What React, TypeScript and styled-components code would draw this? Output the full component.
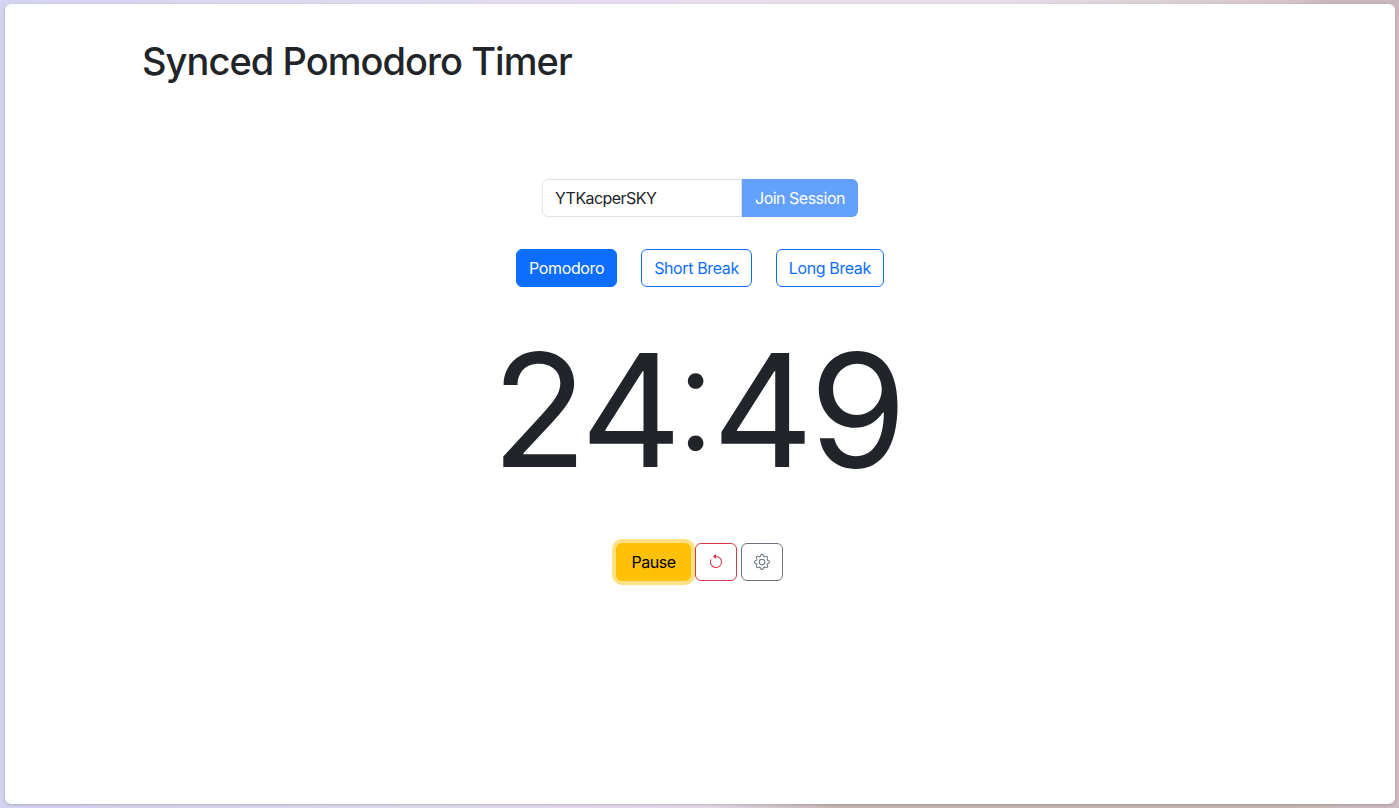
import { useState } from 'react';
import styled, { createGlobalStyle } from 'styled-components';
import { BsArrowCounterclockwise, BsGear } from 'react-icons/bs';

const GlobalStyle = createGlobalStyle`
  html, body {
    margin: 0;
    height: 100%;
  }

  body {
    background:
      linear-gradient(90deg, rgba(198, 180, 180, 0) 50%, #c6b6b4 60%, #c6b6b4 92%, rgba(198, 180, 180, 0) 100%) bottom / 100% 6px no-repeat,
      linear-gradient(90deg, rgba(198, 180, 180, 0) 92%, #c8b8bc 95%) top / 100% 5px no-repeat,
      linear-gradient(90deg, #d3d3f1 0%, #e3dcf0 35%, #e8dfe8 70%, #cdbcc0 100%);
    font-family: Inter, "Liberation Sans", sans-serif;
    color: #212529;
    overflow: hidden;
  }

  * {
    box-sizing: border-box;
  }
`;

const Desktop = styled.div`
  height: 808px;
  padding: 4px 4px 4px 5px;
`;

const AppWindow = styled.main`
  height: 800px;
  background: #fff;
  border-radius: 6px;
  box-shadow: 0 1px 3px rgba(60, 50, 60, 0.25);
`;

const Container = styled.div`
  width: 1140px;
  margin: 0 auto;
  padding: 0 12px;
`;

const Title = styled.h1`
  margin: 0;
  padding-top: 33px;
  font-size: 38px;
  font-weight: 500;
  line-height: 48px;
  letter-spacing: -0.95px;
`;

const Timer = styled.section`
  margin-top: 94px;
  display: flex;
  flex-direction: column;
  align-items: center;
`;

const SessionGroup = styled.form`
  display: flex;
  width: 316px;
  height: 38px;
`;

const SessionInput = styled.input`
  width: 200px;
  padding: 6px 12px;
  border: 1px solid #dee2e6;
  border-radius: 6px 0 0 6px;
  outline: none;
  background: #fff;
  color: #212529;
  font: 400 16px/24px Inter, "Liberation Sans", sans-serif;
  letter-spacing: -0.56px;
`;

const JoinButton = styled.button`
  flex: 1;
  padding: 0;
  border: 0;
  border-radius: 0 6px 6px 0;
  background: #62a1fe;
  color: #fff;
  font: 400 16px/24px Inter, "Liberation Sans", sans-serif;
  letter-spacing: -0.5px;
`;

const Modes = styled.div`
  margin-top: 32px;
  display: flex;
  gap: 24px;
`;

const ModeButton = styled.button<{ $active?: boolean }>`
  height: 38px;
  padding: 0 12px;
  border: 1px solid #0d6efd;
  border-radius: 6px;
  background: ${({ $active }) => ($active ? '#0d6efd' : '#fff')};
  color: ${({ $active }) => ($active ? '#fff' : '#0d6efd')};
  font: 400 16px/24px Inter, "Liberation Sans", sans-serif;
  letter-spacing: -0.38px;
`;

const Clock = styled.div`
  margin-top: 27px;
  margin-bottom: 37px;
  padding-right: 6px;
  font-size: 157px;
  font-weight: 400;
  line-height: 192px;
  letter-spacing: -4.25px;
`;

const ClockColon = styled.span`
  margin-left: -3px;
  font-size: 148px;
  font-weight: 300;
  line-height: 0;
  vertical-align: 17px;
`;

const Controls = styled.div`
  padding-right: 1px;
  display: flex;
  gap: 4px;
`;

const PauseButton = styled.button`
  width: 75px;
  height: 38px;
  border: 1px solid #ffc107;
  border-radius: 6px;
  background: #ffc107;
  box-shadow: 0 0 0 4px rgba(255, 193, 7, 0.5);
  color: #000;
  font: 400 16px/24px Inter, "Liberation Sans", sans-serif;
  letter-spacing: -0.5px;
`;

const IconButton = styled.button<{ $color: string }>`
  width: 42px;
  height: 38px;
  display: flex;
  align-items: center;
  justify-content: center;
  padding: 0;
  border: 1px solid ${({ $color }) => $color};
  border-radius: 6px;
  background: #fff;
  color: ${({ $color }) => $color};
  font-size: 16px;
`;

const modes = ['Pomodoro', 'Short Break', 'Long Break'];

export default function App() {
  const [session, setSession] = useState('YTKacperSKY');

  return (
    <>
      <GlobalStyle />
      <Desktop>
        <AppWindow>
          <Container>
            <Title>Synced Pomodoro Timer</Title>
            <Timer>
              <SessionGroup onSubmit={(e) => e.preventDefault()}>
                <SessionInput value={session} onChange={(e) => setSession(e.target.value)} />
                <JoinButton type="submit">Join Session</JoinButton>
              </SessionGroup>
              <Modes>
                {modes.map((mode, i) => (
                  <ModeButton key={mode} $active={i === 0}>
                    {mode}
                  </ModeButton>
                ))}
              </Modes>
              <Clock>
                24<ClockColon>:</ClockColon>49
              </Clock>
              <Controls>
                <PauseButton>Pause</PauseButton>
                <IconButton $color="#dc3545" aria-label="Reset">
                  <BsArrowCounterclockwise />
                </IconButton>
                <IconButton $color="#6c757d" aria-label="Settings">
                  <BsGear />
                </IconButton>
              </Controls>
            </Timer>
          </Container>
        </AppWindow>
      </Desktop>
    </>
  );
}
